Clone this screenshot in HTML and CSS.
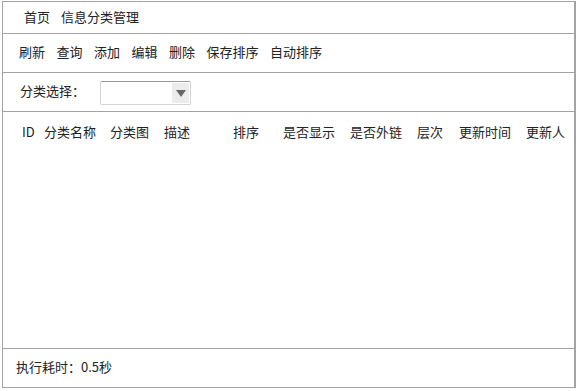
FILE: index.html
```html
<!DOCTYPE html>
<html lang="zh-CN">
<head>
<meta charset="utf-8">
<title>信息分类管理</title>
<link rel="stylesheet" href="styles.css">
</head>
<body>
<div class="panel">
  <div class="crumbs"><span>首页</span><span>信息分类管理</span></div>
  <div class="toolbar">
    <span>刷新</span><span>查询</span><span>添加</span><span>编辑</span><span>删除</span><span>保存排序</span><span>自动排序</span>
  </div>
  <div class="filter">
    <span class="label">分类选择：</span>
    <div class="select"><div class="arrow"></div></div>
  </div>
  <div class="grid">
    <div class="head">
      <span class="c-id">ID</span>
      <span class="c-name">分类名称</span>
      <span class="c-img">分类图</span>
      <span class="c-desc">描述</span>
      <span class="c-sort">排序</span>
      <span class="c-show">是否显示</span>
      <span class="c-link">是否外链</span>
      <span class="c-level">层次</span>
      <span class="c-time">更新时间</span>
      <span class="c-user">更新人</span>
    </div>
  </div>
  <div class="footer">执行耗时：0.5秒</div>
</div>
</body>
</html>
```
FILE: styles.css
```css
html, body {
  margin: 0;
  padding: 0;
  background: #fff;
}
body {
  font-family: "Noto Sans CJK SC", "Microsoft YaHei", sans-serif;
  font-size: 13px;
  line-height: 16px;
  color: #222;
}
.panel {
  margin: 1px 0 0 2px;
  width: 571px;
  border: 1px solid #a3a3a3;
  border-right: 2px solid #a3a3a3;
  display: flex;
  flex-direction: column;
}
.crumbs {
  height: 32px;
  box-sizing: border-box;
  display: flex;
  align-items: center;
  gap: 11px;
  padding-left: 21px;
  padding-bottom: 1px;
  border-bottom: 1px solid #a3a3a3;
}
.toolbar {
  height: 39px;
  box-sizing: border-box;
  padding-bottom: 3px;
  display: flex;
  align-items: center;
  gap: 11.5px;
  padding-left: 16px;
  border-bottom: 1px solid #a3a3a3;
}
.filter {
  height: 39px;
  box-sizing: border-box;
  display: flex;
  align-items: center;
  padding-left: 17px;
  border-bottom: 1px solid #a3a3a3;
}
.filter .label {
  width: 80px;
  margin-bottom: 2px;
}
.select {
  width: 89px;
  height: 22px;
  border: 1px solid #d4d4d4;
  border-top-color: #9a9a9a;
  border-radius: 2px;
  display: flex;
  justify-content: flex-end;
  margin-top: 2px;
}
.arrow {
  width: 17px;
  height: 20px;
  margin: 1px;
  background: #ececec;
  position: relative;
}
.arrow::after {
  content: "";
  position: absolute;
  left: 4px;
  top: 7px;
  border-left: 5px solid transparent;
  border-right: 5px solid transparent;
  border-top: 7px solid #666;
}
.grid {
  height: 237px;
  box-sizing: border-box;
  border-bottom: 1px solid #a3a3a3;
}
.head {
  display: flex;
  height: 40px;
  align-items: center;
  padding-left: 19px;
}
.head span { flex: none; }
.c-id { width: 22px; }
.c-name { width: 66px; }
.c-img { width: 54px; }
.c-desc { width: 69px; }
.c-sort { width: 50px; }
.c-show { width: 67px; }
.c-link { width: 67px; }
.c-level { width: 42px; }
.c-time { width: 67px; }
.footer {
  height: 38px;
  box-sizing: border-box;
  padding-bottom: 3px;
  display: flex;
  align-items: center;
  padding-left: 13px;
}
```
